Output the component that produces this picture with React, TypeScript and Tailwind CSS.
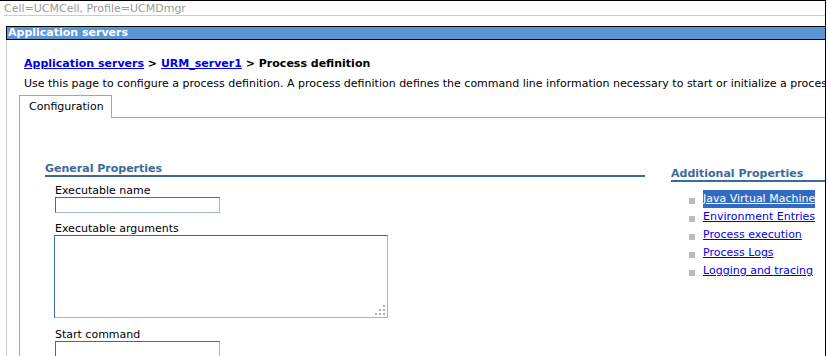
const font = { fontFamily: '"DejaVu Sans", Verdana, sans-serif' };

const links = [
  "Java Virtual Machine",
  "Environment Entries",
  "Process execution",
  "Process Logs",
  "Logging and tracing",
];

function Field({ label, className }: { label: string; className?: string }) {
  return (
    <div className={className}>
      <div className="pl-[10px] text-[11px] leading-[12px] text-black">{label}</div>
      <input
        type="text"
        className="ml-[10px] block h-[16px] w-[165px] border border-t-[#3b6a9c] border-l-[#3b6a9c] border-r-[#9db6d8] border-b-[#9db6d8] bg-white outline-none"
      />
    </div>
  );
}

export default function App() {
  return (
    <div
      className="h-[356px] w-[826px] overflow-hidden border-r border-t border-black bg-white"
      style={font}
    >
      {/* scope line */}
      <div className="ml-[4px] border-b border-[#cccccc] pt-[2px] text-[11px] leading-[12px] text-[#999999]">
        Cell=UCMCell, Profile=UCMDmgr
      </div>

      {/* title bar */}
      <div className="ml-[6px] mt-[10px] h-[14px] border border-r-0 border-black bg-[#5a96d5] pl-px text-[11px] font-bold leading-[12px] text-white">
        Application servers
      </div>

      <div className="ml-[6px] border-l border-[#cccccc] pl-[12px] pt-[17px] text-[11px] leading-[13px]">
        <div className="whitespace-nowrap pl-[5px] font-bold text-black">
          <a href="#" className="text-[#0000ee] underline">Application servers</a>
          {" > "}
          <a href="#" className="text-[#0000ee] underline">URM_server1</a>
          {" > "}
          Process definition
        </div>
        <div className="mt-[7px] whitespace-nowrap pl-[5px] text-black">
          Use this page to configure a process definition. A process definition defines the command line information necessary to start or initialize a process.
        </div>

        {/* tabs */}
        <div className="mt-[5px] flex border-l border-[#8fa7d3]">
          <div className="h-[23px] w-[92px] border-r border-t border-[#8fa7d3] pl-[9px] pt-[4px] text-black">
            Configuration
          </div>
          <div className="h-[23px] flex-1 border-b border-[#8fa7d3]" />
        </div>

        {/* panel */}
        <div className="flex h-[400px] gap-[26px] border-l border-[#8fa7d3] pl-[25px] pt-[44px]">
          <div className="w-[600px] shrink-0">
            <div className="border-b-2 border-[#3b6a9c] font-bold text-[#3b6a9c]">General Properties</div>
            <Field label="Executable name" className="mt-[8px]" />
            <div className="mt-[10px]">
              <div className="pl-[10px] text-[11px] leading-[12px] text-black">Executable arguments</div>
              <div className="relative ml-[9px] h-[83px] w-[334px]">
                <textarea className="block h-full w-full resize-none border border-t-[#3b6a9c] border-l-[#3b6a9c] border-r-[#9db6d8] border-b-[#9db6d8] bg-white outline-none" />
                <svg className="absolute bottom-[3px] right-[3px]" width="10" height="10" viewBox="0 0 10 10">
                  <rect x="8" y="0" width="2" height="2" fill="#b0b0b0" />
                  <rect x="4" y="4" width="2" height="2" fill="#b0b0b0" />
                  <rect x="8" y="4" width="2" height="2" fill="#b0b0b0" />
                  <rect x="0" y="8" width="2" height="2" fill="#b0b0b0" />
                  <rect x="4" y="8" width="2" height="2" fill="#b0b0b0" />
                  <rect x="8" y="8" width="2" height="2" fill="#b0b0b0" />
                </svg>
              </div>
            </div>
            <Field label="Start command" className="mt-[11px]" />
          </div>

          <div className="flex-1 pt-[6px]">
            <div className="whitespace-nowrap border-b-2 border-[#3b6a9c] font-bold leading-[12px] text-[#3b6a9c]">
              Additional Properties
            </div>
            <ul className="mt-[8px] pl-[18px]">
              {links.map((l, i) => (
                <li key={l} className="flex h-[18px] items-start whitespace-nowrap leading-[18px]">
                  <span className="mt-[8px] h-[6px] w-[6px] shrink-0 bg-[#bbbbbb]" />
                  <a
                    href="#"
                    className={
                      i === 0
                        ? "ml-[8px] bg-[#316ac5] text-white underline"
                        : "ml-[8px] text-[#0000ee] underline"
                    }
                  >
                    {l}
                  </a>
                </li>
              ))}
            </ul>
          </div>
        </div>
      </div>
    </div>
  );
}
